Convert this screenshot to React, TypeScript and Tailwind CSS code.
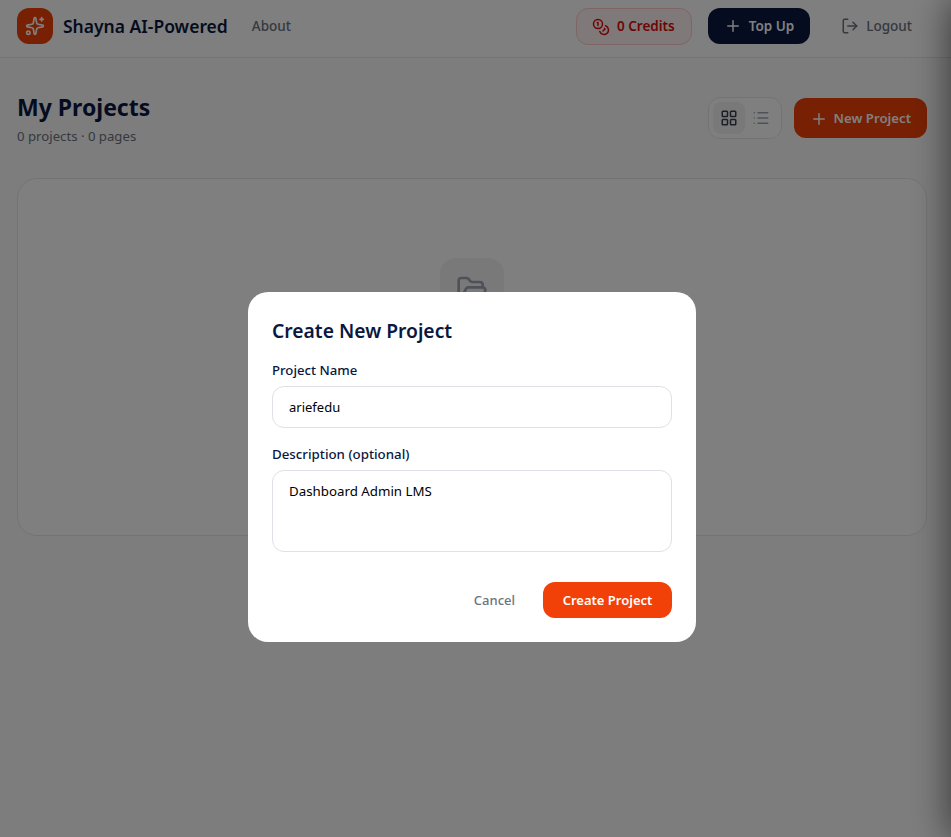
import { Coins, FolderOpen, LayoutGrid, List, LogOut, Plus, Sparkles } from "lucide-react"

export default function App() {
  return (
    <div className="relative min-h-[837px] bg-[#fbfbfb] font-['Noto_Sans','Open_Sans',sans-serif] text-[#0a1840]">
      <header className="flex h-[58px] items-start justify-between border-b border-[#e5e7eb] bg-white pt-2 pl-[17px] pr-[23px]">
        <div className="flex h-9 items-center">
          <div className="flex h-9 w-9 items-center justify-center rounded-xl bg-[#f14108]">
            <Sparkles className="h-5 w-5 text-white" strokeWidth={2} />
          </div>
          <span className="ml-[10px] text-[17.5px] font-semibold">Shayna AI-Powered</span>
          <a className="ml-6 text-[13.5px] font-medium text-[#6b7280]">About</a>
        </div>
        <div className="flex items-start">
          <div className="flex h-[37px] items-center gap-[7px] rounded-xl border border-[#fecaca] bg-[#fef2f2] pl-[15px] pr-4 text-[13.5px] font-semibold text-[#dc0a0a]">
            <Coins className="h-[18px] w-[18px]" />
            0 Credits
          </div>
          <button className="ml-4 flex h-9 items-center gap-[7px] rounded-xl bg-[#0a1840] px-4 text-[13.5px] font-semibold text-white">
            <Plus className="h-[18px] w-[18px]" />
            Top Up
          </button>
          <button className="ml-[15px] flex h-9 items-center gap-[7px] px-4 text-[13.5px] font-medium text-[#6b7280]">
            <LogOut className="h-[18px] w-[18px]" />
            Logout
          </button>
        </div>
      </header>

      <main className="w-[944px] px-[17px] pt-[39px]">
        <div className="flex items-start justify-between">
          <div className="-mt-1">
            <h1 className="text-[23px] leading-[28px] font-bold">My Projects</h1>
            <p className="mt-[6px] text-[13.2px] text-[#6b7280]">0 projects · 0 pages</p>
          </div>
          <div className="flex items-center gap-3">
            <div className="flex h-[42px] items-center rounded-xl border border-[#e5e7eb] bg-white p-1">
              <span className="flex h-8 w-8 items-center justify-center rounded-lg bg-[#f2f2f3] text-[#374151]">
                <LayoutGrid className="h-[18px] w-[18px]" />
              </span>
              <span className="flex h-8 w-8 items-center justify-center rounded-lg text-[#9ca3af]">
                <List className="h-[18px] w-[18px]" />
              </span>
            </div>
            <button className="flex h-10 items-center gap-1.5 rounded-xl bg-[#f14108] px-4 pt-px text-[13.2px] font-semibold text-white">
              <Plus className="h-[18px] w-[18px]" />
              New Project
            </button>
          </div>
        </div>

        <section className="mt-[31px] flex h-[358px] flex-col items-center rounded-[20px] border border-[#e5e7eb] bg-white pt-[79px]">
          <div className="flex h-16 w-16 items-center justify-center rounded-2xl bg-[#f2f2f3] text-[#9ca3af]">
            <FolderOpen className="h-8 w-8" />
          </div>
          <h3 className="mt-5 text-lg font-semibold">No projects yet</h3>
          <p className="mt-1 text-sm text-[#6b7280]">Create your first project to get started</p>
        </section>
      </main>

      {/* drawer parked off screen, only its shadow shows */}
      <div className="fixed top-0 left-full h-full w-80 bg-white shadow-[0_0_36px_rgba(0,0,0,0.6)]" />

      <div className="fixed inset-0 flex justify-center bg-black/50 pt-[292px] pr-[7px]">
        <div className="h-[350px] w-[448px] rounded-[20px] bg-white p-6">
          <h2 className="text-[19.3px] leading-[30px] font-semibold">Create New Project</h2>
          <label className="mt-[15px] block text-[13.2px] leading-[18px] font-medium">Project Name</label>
          <input
            readOnly
            value="ariefedu"
            className="mt-[7px] h-[42px] w-full rounded-xl border border-[#e0e0e6] px-4 text-[13px] text-black outline-none"
          />
          <label className="mt-[17px] block text-[13.3px] leading-[18px] font-medium">Description (optional)</label>
          <textarea
            readOnly
            value="Dashboard Admin LMS"
            className="mt-[7px] block h-[82px] w-full resize-none rounded-xl border border-[#e0e0e6] px-4 py-[11px] text-[13.3px] leading-[18px] text-black outline-none"
          />
          <div className="mt-[30px] flex items-center justify-end gap-[8px]">
            <button className="h-9 px-5 pt-px text-[13px] font-medium text-[#6b7280]">Cancel</button>
            <button className="h-9 w-[129px] rounded-xl bg-[#f14108] pt-px text-[13px] font-semibold text-white">Create Project</button>
          </div>
        </div>
      </div>
    </div>
  )
}
